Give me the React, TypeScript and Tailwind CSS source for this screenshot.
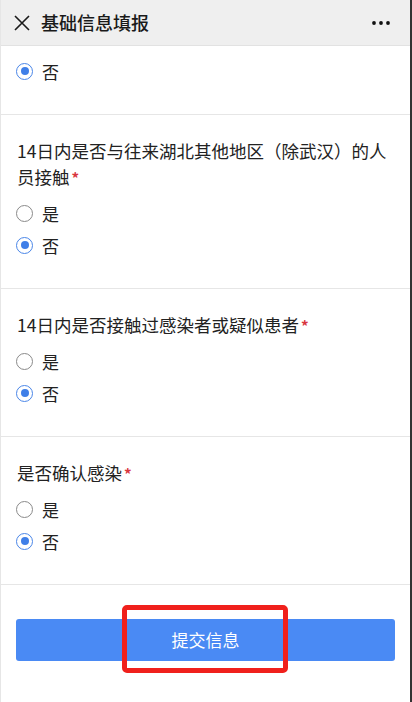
import { useState } from "react";

type Answer = "yes" | "no";

interface Question {
  id: string;
  title: string;
}

const QUESTIONS: Question[] = [
  { id: "q1", title: "14日内是否与往来湖北其他地区（除武汉）的人员接触" },
  { id: "q2", title: "14日内是否接触过感染者或疑似患者" },
  { id: "q3", title: "是否确认感染" },
];

const FONT = {
  fontFamily: '"Noto Sans CJK SC", "Noto Sans", Roboto, sans-serif',
};

function Radio({
  label,
  checked,
  onClick,
}: {
  label: string;
  checked: boolean;
  onClick: () => void;
}) {
  return (
    <button
      onClick={onClick}
      className="flex h-8 items-center gap-[9px] pl-[15px] text-left"
    >
      <span
        className={`flex h-[17px] w-[17px] items-center justify-center rounded-full border ${
          checked ? "border-[#4a86e8]" : "border-[#8a8a8a]"
        }`}
      >
        {checked && <span className="h-[8px] w-[8px] rounded-full bg-[#3f7fe8]" />}
      </span>
      <span className="text-[17px] leading-none text-[#222]">{label}</span>
    </button>
  );
}

function RadioGroup({
  value,
  onChange,
  onlyNo,
}: {
  value: Answer;
  onChange: (v: Answer) => void;
  onlyNo?: boolean;
}) {
  return (
    <div className="flex flex-col">
      {!onlyNo && (
        <Radio label="是" checked={value === "yes"} onClick={() => onChange("yes")} />
      )}
      <Radio label="否" checked={value === "no"} onClick={() => onChange("no")} />
    </div>
  );
}

export default function App() {
  const [answers, setAnswers] = useState<Record<string, Answer>>({
    q0: "no",
    q1: "no",
    q2: "no",
    q3: "no",
  });

  const set = (id: string) => (v: Answer) =>
    setAnswers((prev) => ({ ...prev, [id]: v }));

  return (
    <div
      style={FONT}
      className="flex h-[702px] w-[412px] flex-col overflow-hidden border-l border-r-2 border-l-[#e6e6e6] border-r-[#333] bg-white"
    >
      {/* header */}
      <div className="flex h-[46px] shrink-0 items-center border-b border-[#e2e2e2] bg-[#efefef] pl-[13px] pr-[19px]">
        <svg width="16" height="16" viewBox="0 0 16 16" className="mr-[11px]">
          <path d="M1 1L15 15M15 1L1 15" stroke="#1a1a1a" strokeWidth="1.6" />
        </svg>
        <h1 className="flex-1 text-[18px] font-medium text-[#1a1a1a]">基础信息填报</h1>
        <svg width="20" height="6" viewBox="0 0 20 6">
          <circle cx="3" cy="3" r="1.9" fill="#111" />
          <circle cx="10" cy="3" r="1.9" fill="#111" />
          <circle cx="17" cy="3" r="1.9" fill="#111" />
        </svg>
      </div>

      {/* tail of previous question */}
      <div className="border-b border-[#e6e6e6] pb-[27px] pt-[9px]">
        <RadioGroup value={answers.q0} onChange={set("q0")} onlyNo />
      </div>

      {QUESTIONS.map((q) => (
        <div key={q.id} className="border-b border-[#e6e6e6] pb-[27px] pt-[23px]">
          <p className="mb-[6px] px-[16px] text-[17.5px] leading-[26px] text-[#222]">
            {q.title}
            <span className="ml-[2px] text-[15px] font-bold text-[#d9363e]">*</span>
          </p>
          <RadioGroup value={answers[q.id]} onChange={set(q.id)} />
        </div>
      ))}

      {/* submit */}
      <div className="relative px-[15px] pt-[34px]">
        <button className="flex h-[42px] w-full items-center justify-center rounded-[3px] bg-[#4a8af4] text-[17px] text-white">
          提交信息
        </button>
        <div className="pointer-events-none absolute left-[121px] top-[20px] h-[68px] w-[166px] rounded-[5px] border-[5px] border-[#f0201c]" />
      </div>
    </div>
  );
}
